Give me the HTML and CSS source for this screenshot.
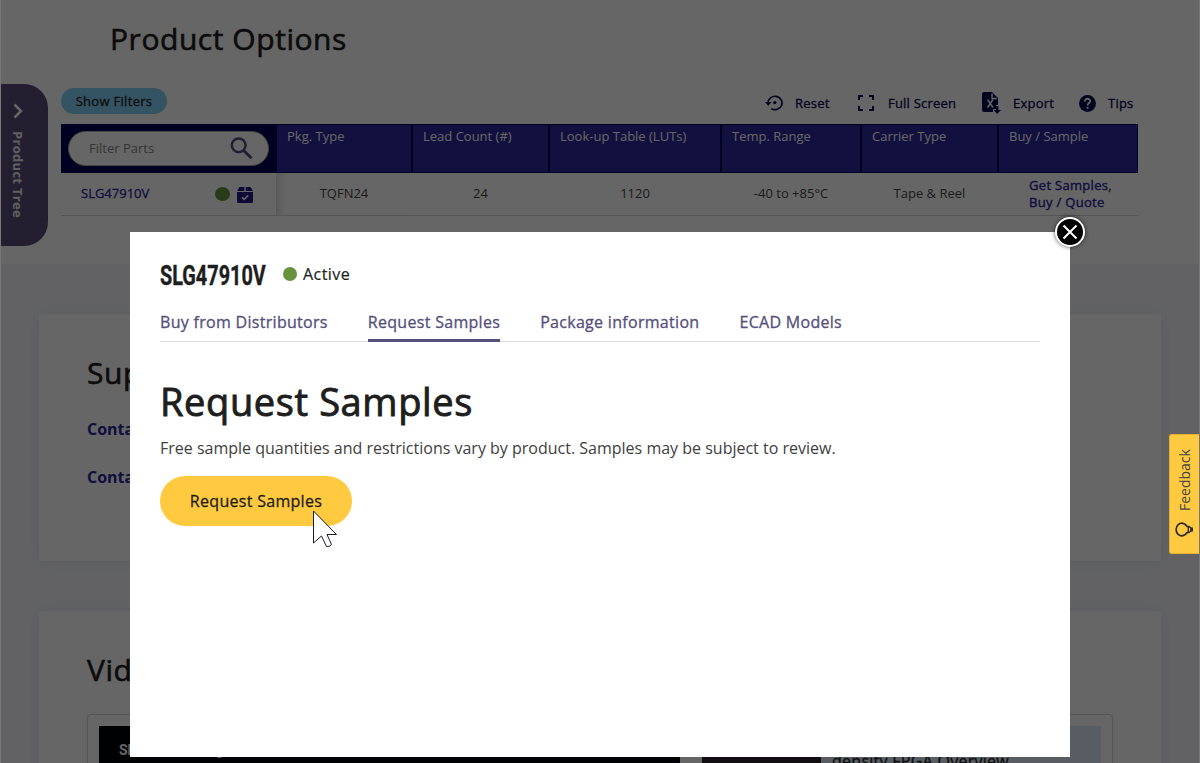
FILE: index.html
```html
<!DOCTYPE html>
<html lang="en">
<head>
<meta charset="utf-8">
<title>Product Options</title>
<link rel="stylesheet" href="styles.css">
</head>
<body>
<div class="page">
  <section class="options">
    <h1 class="title">Product Options</h1>
    <div class="toolbar">
      <button class="show-filters"><span>Show Filters</span></button>
      <nav class="tools">
        <a class="tool reset"><svg width="18" height="16" viewBox="0 0 18 16"><path d="M3 8a7 6.7 0 1 1 3.2 5.6" fill="none" stroke="currentColor" stroke-width="1.7"/><path d="M0 7h6.5L3.2 10.7z" fill="currentColor"/><circle cx="9.8" cy="7.6" r="1.7" fill="currentColor"/></svg><span>Reset</span></a>
        <a class="tool full"><svg width="16" height="16" viewBox="0 0 16 16"><path d="M1 5V1h4M11 1h4v4M15 11v4h-4M5 15H1v-4" fill="none" stroke="currentColor" stroke-width="2"/></svg><span>Full Screen</span></a>
        <a class="tool export"><svg width="19" height="22" viewBox="0 0 19 22"><path d="M2 0h8l6 6v7h-2v4h-3v3H2Q0 20 0 18V2Q0 0 2 0z" fill="currentColor"/><path d="M10 1.5V6.5h4.8M5.5 7.5l5.5 8M11 7.5l-5.5 8" fill="none" stroke="#fff" stroke-width="1.4"/><path d="M14 14h2.400v4H19l-3.800 4-3.800-4H14z" fill="currentColor"/></svg><span>Export</span></a>
        <a class="tool tips"><svg width="17" height="17" viewBox="0 0 17 17"><circle cx="8.5" cy="8.5" r="8.4" fill="currentColor"/><path d="M5.8 6.4c0-3.6 5.6-3.4 5.4-.1-.1 1.7-2.6 1.8-2.6 4.1" fill="none" stroke="#fff" stroke-width="1.8"/><path d="M7.6 11.8h1.9v1.9H7.6z" fill="#fff"/></svg><span>Tips</span></a>
      </nav>
    </div>
    <div class="parts">
      <div class="head search-cell">
        <div class="search"><span>Filter Parts</span><svg width="23" height="23" viewBox="0 0 23 23"><circle cx="8.7" cy="8.3" r="6.9" fill="none" stroke="#544f7b" stroke-width="2.5"/><path d="M13.5 13.2l8 8" stroke="#544f7b" stroke-width="3"/></svg></div>
      </div>
      <div class="head"><span>Pkg. Type</span></div>
      <div class="head"><span>Lead Count (#)</span></div>
      <div class="head"><span>Look-up Table (LUTs)</span></div>
      <div class="head"><span>Temp. Range</span></div>
      <div class="head"><span>Carrier Type</span></div>
      <div class="head last"><span>Buy / Sample</span></div>
      <div class="cell part"><a>SLG47910V</a><i class="dot"></i><svg width="16" height="16" viewBox="0 0 16 16"><path d="M2.5 0h4.8v4H0zM8.7 0h4.8L16 4H8.7zM0 5h16v9.5q0 1.5-1.5 1.5h-13Q0 16 0 14.500z" fill="#211c86"/><path d="M5 10.200l2.200 2.200 4-4" fill="none" stroke="#fff" stroke-width="1.500"/></svg></div>
      <div class="cell">TQFN24</div>
      <div class="cell">24</div>
      <div class="cell">1120</div>
      <div class="cell">-40 to +85°C</div>
      <div class="cell">Tape &amp; Reel</div>
      <div class="cell links"><span><a>Get Samples</a>,<br><a>Buy / Quote</a></span></div>
    </div>
  </section>
  <section class="card support">
    <h2 class="title">Support</h2>
    <a class="contact">Contact Sales</a>
    <a class="contact">Contact Support</a>
  </section>
  <section class="card videos">
    <h2 class="title">Videos</h2>
    <div class="player">
      <div class="screen">SLG47910 Design Overview</div>
      <div class="playlist"><div class="thumb"></div><div class="caption">Low-<br>density FPGA Overview</div></div>
    </div>
  </section>
</div>
<aside class="tree"><svg width="10" height="16" viewBox="0 0 10 16"><path d="M1.500 1.500L8 8l-6.500 6.500" fill="none" stroke="#fff" stroke-width="2.500"/></svg><span>Product Tree</span></aside>
<div class="shade"></div>
<main class="modal">
  <button class="close"><svg width="16" height="16" viewBox="0 0 16 16"><path d="M1.500 1.500l13 13M14.500 1.500l-13 13" stroke="#fff" stroke-width="2"/></svg></button>
  <header class="modal-head"><div class="number"><span>SLG47910V</span></div><i class="dot"></i><span class="status">Active</span></header>
  <nav class="tabs"><a>Buy from Distributors</a><a class="active">Request Samples</a><a>Package information</a><a>ECAD Models</a></nav>
  <h2 class="modal-title">Request Samples</h2>
  <p class="note">Free sample quantities and restrictions vary by product. Samples may be subject to review.</p>
  <button class="request">Request Samples</button>
</main>
<aside class="feedback"><span>Feedback</span><svg width="18" height="16" viewBox="0 0 18 16"><path d="M12 4.500A5.800 6.300 0 1 0 12 10.500" fill="none" stroke="#2b2b2b" stroke-width="1.700"/><path d="M11.500 4.500h2.500l2 1.500v3l-2 1.500h-2.500M13.300 4.500v6" fill="none" stroke="#2b2b2b" stroke-width="1.400"/><path d="M15.500 7.500H18" stroke="#2b2b2b" stroke-width="4"/></svg></aside>
<svg class="cursor" width="26" height="39" viewBox="0 0 26 39"><path d="M.5 1v32l8-7 5 10.500q3 .5 5-2l-4.500-10h9.500z" fill="#fff" stroke="#1b1b26"/></svg>
</body>
</html>
```

FILE: styles.css
```css
* { box-sizing: border-box; }
body { margin: 0; width: 1200px; height: 763px; overflow: hidden; position: relative; font-family: "Open Sans", "Noto Sans", sans-serif; color: #1e1e1e; background: #f5f6fa; }
h1, h2, p { margin: 0; }
button { border: 0; font-family: inherit; padding: 0; }
svg { display: block; flex: none; }
.page { height: 763px; overflow: hidden; }
.title { font-size: 30px; line-height: 40px; font-weight: 500; letter-spacing: .55px; -webkit-text-stroke: .6px; }
.options { height: 264px; background: #fff; padding: 19px 61px 0 61px; }
.options .title { padding-left: 49px; }
.toolbar { display: flex; justify-content: space-between; height: 65px; padding-top: 29px; }
.show-filters { width: 106px; height: 26px; border-radius: 13px; background: #82d2f7; font-size: 13px; font-weight: 500; color: #1e1e1e; letter-spacing: .3px; white-space: nowrap; -webkit-text-stroke: .3px; }
.tools { display: flex; height: 30px; color: #06064f; font-size: 13px; font-weight: 500; letter-spacing: .22px; padding-right: 6px; -webkit-text-stroke: .3px; }
.tool { display: flex; align-items: center; white-space: nowrap; }
.reset { width: 93px; gap: 12px; }
.full { width: 124px; gap: 14px; }
.export { width: 97px; gap: 12px; }
.tips { width: 54px; gap: 12px; }
.parts { display: grid; grid-template-columns: 216px 136px 137px 172px 140px 137px 139px; grid-template-rows: 49px 43px; font-size: 13px; }
.head { background: #2d289d; border: 1px solid #000055; border-width: 1px 2px 1px 0; color: #fff; line-height: 18px; padding: 2px 0 0 10px; white-space: nowrap; letter-spacing: 0; }
.head.last { border-right-width: 1px; }
.search-cell { background: #000055; padding: 6px 5px 0 7px; }
.search { height: 35px; width: 201px; border-radius: 18px; background: #fff; border: 1px solid #aaa; display: flex; align-items: center; justify-content: space-between; padding: 0 15px 0 20px; color: #858585; }
.search span { margin-top: -2px; }
.cell { background: #fff; border-bottom: 1px solid #d2d2d2; display: flex; align-items: center; justify-content: center; color: #484848; padding: 0 2px 2px 0; white-space: nowrap; }
.cell:nth-child(9) { box-shadow: inset 9px 0 8px -6px #dcdcdc; }
.part { justify-content: flex-start; padding-left: 20px; border-right: 1px solid #ddd; }
.part a { color: #2a289d; width: 134px; font-weight: 500; -webkit-text-stroke: .3px; }
.dot { display: block; flex: none; width: 15px; height: 14px; border-radius: 50%; background: #67933e; }
.part .dot { margin-top: 2px; }
.part svg { margin-left: 7px; margin-top: 3px; }
.links { line-height: 17px; padding: 0 0 0 4px; letter-spacing: .3px; -webkit-text-stroke: .4px; }
.links a { color: #2a289d; }
.card { width: 1122px; margin-left: 39px; background: #fff; box-shadow: 0 0 20px rgba(40,40,70,.06); padding: 39px 48px 0; }
.support { height: 247px; margin-top: 50px; }
.contact { display: block; font-size: 16px; line-height: 24px; font-weight: 700; color: #2a289d; margin-top: 24px; }
.videos { margin-top: 50px; height: 300px; }
.player { margin-top: 24px; height: 200px; border: 1px solid #d5d5d5; border-radius: 4px; padding: 11px; display: flex; justify-content: space-between; }
.screen { width: 581px; background: #000305; color: #fff; font: 700 14px/22px Roboto, sans-serif; padding: 13px 20px; }
.playlist { width: 399px; background: #d9e9f5; display: flex; gap: 11px; }
.thumb { width: 119px; background: #292329; }
.caption { font-size: 16px; line-height: 24px; letter-spacing: .27px; -webkit-text-stroke: .3px; margin-top: -1px; white-space: nowrap; }
.tree { position: absolute; left: 0; top: 84px; width: 48px; height: 162px; background: #574f7b; border-radius: 0 24px 24px 0; color: #eee; padding: 19px 0 0 13px; }
.tree span { display: block; writing-mode: vertical-rl; font-size: 13px; line-height: 12px; font-weight: 700; letter-spacing: .3px; margin: 12px 0 0 -1px; white-space: nowrap; }
.shade { position: absolute; inset: 0; background: rgba(0,0,0,.6); box-shadow: inset 1px 0 #777, inset -1px 0 #777; }
.modal { position: absolute; left: 130px; top: 232px; width: 940px; height: 525px; background: #fff; padding: 28px 30px; }
.close { position: absolute; right: -15px; top: -15px; width: 30px; height: 30px; border-radius: 50%; background: #000; border: 2px solid #fff; box-shadow: 0 0 4px rgba(0,0,0,.7); display: grid; place-items: center; }
.modal-head { display: flex; height: 30px; align-items: center; }
.number { width: 123px; font: 700 27px/30px Roboto, sans-serif; white-space: nowrap; padding-top: 2px; }
.number span { display: inline-block; transform: scaleX(.735); transform-origin: left; -webkit-text-stroke: .4px; }
.modal-head .dot { width: 14px; margin-bottom: 3px; }
.status { font-size: 16px; font-weight: 500; letter-spacing: .45px; margin: -3px 0 0 6px; -webkit-text-stroke: .2px; }
.tabs { display: flex; gap: 40px; height: 52px; border-bottom: 1px solid #dedee2; font-size: 16px; font-weight: 500; color: #544f7b; letter-spacing: .3px; -webkit-text-stroke: .3px; }
.tabs a { height: 52px; padding-top: 19px; line-height: 26px; white-space: nowrap; }
.tabs .active { border-bottom: 3px solid #544f7b; }
.modal-title { font-size: 38px; line-height: 50px; font-weight: 500; letter-spacing: .62px; margin-top: 34px; -webkit-text-stroke: .9px; }
.note { font-size: 16px; line-height: 26px; margin-top: 9px; color: #404040; white-space: nowrap; }
.request { display: block; width: 192px; height: 50px; margin-top: 15px; border-radius: 25px; background: #ffca3f; font-size: 16px; font-weight: 500; letter-spacing: .3px; color: #1e1e1e; -webkit-text-stroke: .3px; }
.feedback { position: absolute; left: 1169px; top: 434px; width: 30px; height: 120px; background: #ffca3f; border: 1px solid #e4b02f; border-right: 0; border-radius: 3px 0 0 3px; color: #444; padding: 11px 0 0 5px; }
.feedback span { writing-mode: vertical-rl; transform: rotate(180deg); display: block; font-size: 14px; line-height: 20px; height: 65px; }
.feedback svg { margin-top: 11px; }
.cursor { position: absolute; left: 313px; top: 510px; }
```
